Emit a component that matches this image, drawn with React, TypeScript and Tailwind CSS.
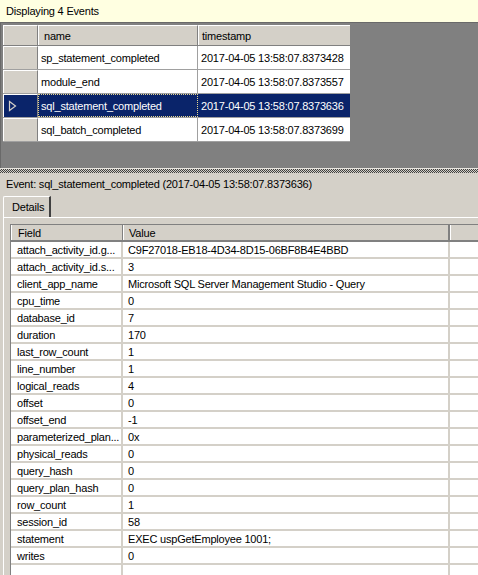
import React from "react";

const events = [
  { name: "sp_statement_completed", ts: "2017-04-05 13:58:07.8373428" },
  { name: "module_end", ts: "2017-04-05 13:58:07.8373557" },
  { name: "sql_statement_completed", ts: "2017-04-05 13:58:07.8373636", sel: true },
  { name: "sql_batch_completed", ts: "2017-04-05 13:58:07.8373699" },
];

const fields: [string, string][] = [
  ["attach_activity_id.g...", "C9F27018-EB18-4D34-8D15-06BF8B4E4BBD"],
  ["attach_activity_id.s...", "3"],
  ["client_app_name", "Microsoft SQL Server Management Studio - Query"],
  ["cpu_time", "0"],
  ["database_id", "7"],
  ["duration", "170"],
  ["last_row_count", "1"],
  ["line_number", "1"],
  ["logical_reads", "4"],
  ["offset", "0"],
  ["offset_end", "-1"],
  ["parameterized_plan...", "0x"],
  ["physical_reads", "0"],
  ["query_hash", "0"],
  ["query_plan_hash", "0"],
  ["row_count", "1"],
  ["session_id", "58"],
  ["statement", "EXEC uspGetEmployee 1001;"],
  ["writes", "0"],
];

export default function App() {
  return (
    <div className="w-[478px] h-[575px] overflow-hidden bg-[#d4d0c8] flex flex-col font-['Liberation_Sans',Arial,sans-serif] text-[11px] tracking-[-0.2px] leading-none text-black">
      {/* info bar */}
      <div className="h-[23px] shrink-0 bg-[#ffffe1] border-b border-[#696969] flex items-center pl-[6px] pt-[1px]">
        Displaying 4 Events
      </div>

      {/* events grid area */}
      <div className="h-[145px] shrink-0 bg-[#808080] border-l border-[#696969] pl-[2px] pt-[2px]">
        <div className="w-[347px] flex flex-col">
          {/* header */}
          <div className="flex h-[21px] border-b border-[#808080]">
            <div className="w-[35px] bg-[#d4d0c8] border-t border-l border-white border-r border-r-[#808080]" />
            <div className="w-[160px] bg-[#d4d0c8] border-t border-l border-white border-r border-r-[#808080] flex items-center pl-[5px] pt-[1px]">
              name
            </div>
            <div className="w-[152px] bg-[#d4d0c8] border-t border-l border-white flex items-center pl-[3px] pt-[1px]">
              timestamp
            </div>
          </div>
          {events.map((e) => (
            <div key={e.name} className="flex h-[24px] border-b border-[#a0a0a0]">
              <div
                className={
                  e.sel
                    ? "w-[35px] bg-[#0a246a] border-t border-l border-white border-r border-r-[#808080] flex items-center pl-[4px]"
                    : "w-[35px] bg-[#d4d0c8] border-t border-l border-white border-r border-r-[#808080]"
                }
              >
                {e.sel && (
                  <svg width="9" height="12" viewBox="0 0 9 12">
                    <path d="M1.5 1.5 L7.5 6 L1.5 10.5 Z" fill="none" stroke="#d4d0c8" strokeWidth="1.2" />
                  </svg>
                )}
              </div>
              <div
                className={
                  e.sel
                    ? "w-[160px] bg-[#0a246a] text-white border border-dotted border-[#e8d890] flex items-center pl-[2px] pt-[1px]"
                    : "w-[160px] bg-white border-r border-[#a0a0a0] flex items-center pl-[3px] pt-[1px]"
                }
              >
                {e.name}
              </div>
              <div
                className={
                  e.sel
                    ? "w-[152px] bg-[#0a246a] text-white flex items-center pl-[3px] pt-[1px]"
                    : "w-[152px] bg-white flex items-center pl-[3px] pt-[1px]"
                }
              >
                {e.ts}
              </div>
            </div>
          ))}
        </div>
      </div>

      {/* splitter */}
      <div className="h-[5px] shrink-0 border-t border-[#e8e6e0] bg-[conic-gradient(#404040_25%,#d4d0c8_0_50%,#404040_0_75%,#d4d0c8_0)] bg-[length:2px_2px]" />

      {/* event label */}
      <div className="h-[22px] shrink-0 flex items-center pl-[6px]">
        Event: sql_statement_completed (2017-04-05 13:58:07.8373636)
      </div>

      {/* tab strip */}
      <div className="h-[22px] shrink-0 flex items-end pl-[3px]">
        <div className="h-[21px] w-[48px] border-t border-l border-white border-r-2 border-r-[#404040] rounded-tl-[2px] flex items-center pl-[8px]">
          Details
        </div>
      </div>

      {/* tab panel */}
      <div className="flex-1 ml-[3px] border-t border-l border-white pl-[6px] pt-[6px]">
        <div className="border-t border-l border-[#808080] bg-white h-full">
          {/* header */}
          <div className="flex h-[17px] bg-[#d4d0c8] border-b-2 border-[#808080]">
            <div className="w-[112px] border-l border-white border-r border-r-[#808080] flex items-center pl-[6px] pt-[1px]">
              Field
            </div>
            <div className="w-[327px] border-l border-white border-r-2 border-r-[#808080] flex items-center pl-[5px] pt-[1px]">
              Value
            </div>
            <div className="flex-1 border-l border-white" />
          </div>
          {fields.map(([f, v]) => (
            <div key={f} className="flex h-[17px] border-b-2 border-[#d4d0c8]">
              <div className="w-[112px] border-r-2 border-[#d4d0c8] flex items-center pl-[6px] pt-[1px] whitespace-nowrap overflow-hidden">
                {f}
              </div>
              <div className="w-[327px] border-r-2 border-[#d4d0c8] flex items-center pl-[5px] pt-[1px] whitespace-nowrap overflow-hidden">
                {v}
              </div>
              <div className="flex-1" />
            </div>
          ))}
          <div className="flex h-[20px]">
            <div className="w-[112px] border-r-2 border-[#d4d0c8]" />
            <div className="w-[327px] border-r-2 border-[#d4d0c8]" />
          </div>
        </div>
      </div>
    </div>
  );
}
